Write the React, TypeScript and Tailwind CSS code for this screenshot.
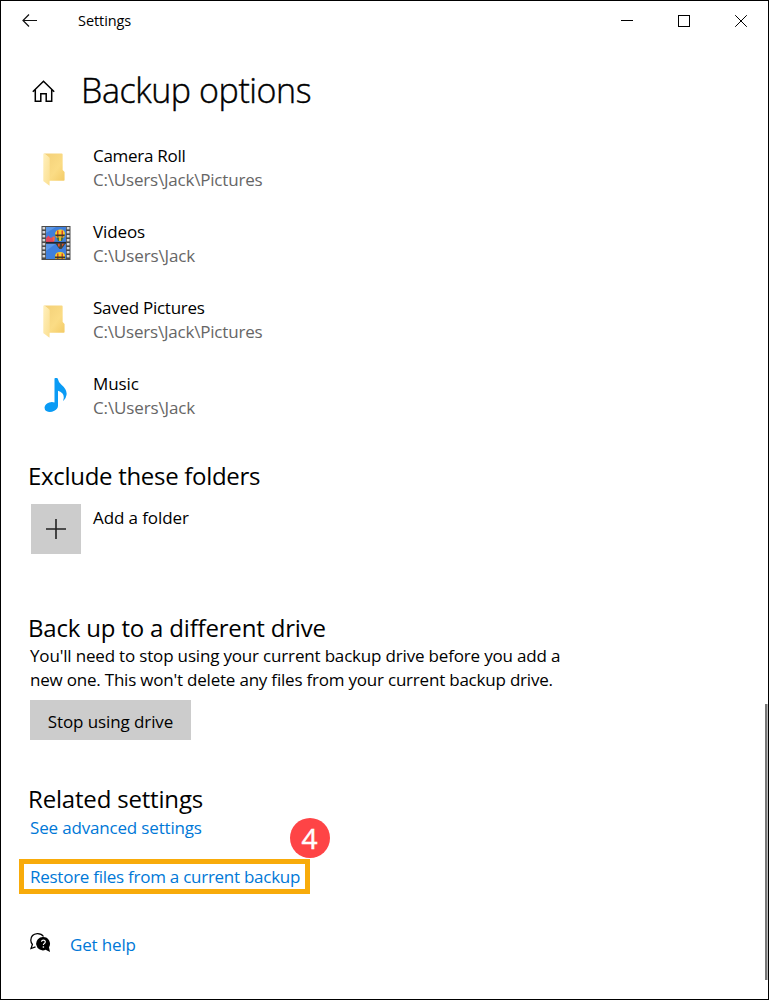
import React from "react";

function FolderIcon() {
  return (
    <svg className="mt-[3px] mr-[3px]" width="23" height="34" viewBox="0 0 24 34" preserveAspectRatio="none" aria-hidden="true">
      <defs>
        <linearGradient id="folderBack" x1="0" y1="0" x2="1" y2="1">
          <stop offset="0" stopColor="#f3d078" />
          <stop offset="0.6" stopColor="#fbdc85" />
          <stop offset="1" stopColor="#f3cb66" />
        </linearGradient>
        <linearGradient id="folderFront" x1="0" y1="0" x2="1" y2="1">
          <stop offset="0" stopColor="#fff0bd" />
          <stop offset="1" stopColor="#fbdf90" />
        </linearGradient>
      </defs>
      <path d="M1 .5h18.500q1 0 1 1V17l2 2v8q0 .8-.8.800H6V4.500z" fill="url(#folderBack)" />
      <path d="M.3 1q0-.8.9-.5l5 3.500q.8.600.8 1.500v20l-.2 7.200-5.900-4.200q-.6-.4-.6-1.100z" fill="url(#folderFront)" />
    </svg>
  );
}

function VideoIcon() {
  const holes = [1, 5, 9, 13, 17, 21, 25, 29];
  return (
    <svg className="-mt-0.5" width="30" height="34" viewBox="0 0 30 34" aria-hidden="true">
      <rect x=".5" width="29" height="34" fill="#4b4b4b" />
      <rect x="5" y="1" width="20" height="15" fill="#3f7fdc" />
      <rect x="5" y="17.500" width="20" height="15.500" fill="#3f80df" />
      <path d="M5 1h10L5 7zM5 17.500h10L5 25z" fill="#5b97e6" />
      <path d="M5 12l2.500-2.500 2 2.500 2-1 1.500 2v3H5z" fill="#e2475d" />
      <path d="M11.500 10.500h2.500l-.5 4.500H12z" fill="#f06a42" />
      <path d="M14 8.500q0-4.700 5-5t5 5q0 2-2.500 4h-5q-2.500-2-2.500-4" fill="#f6cf2c" />
      <path d="M16 4.500h1.500v7H16zM20.500 4.500H22v7h-1.500z" fill="#d8452c" />
      <path d="M14 8.500h10l-.6 1.700h-8.800z" fill="#3d3b2a" />
      <path d="M15.500 11.500h7L21 15h-4z" fill="#3f7042" />
      <path d="M18 11h2v4h-2z" fill="#e3b92c" />
      <rect x="5" y="15.900" width="20" height="1.700" fill="#20262e" />
      <path d="M14.500 17.600h10l-2 2.900-2 2.500h-2l-2-2.500z" fill="#4a4334" />
      <path d="M17 17.800h1.800v2.700H17zM21 17.800h2l-2 2.700z" fill="#e34f29" />
      <path d="M14 31q0-4.800 5-5t5 5v2H14z" fill="#f6cf2c" />
      <path d="M16 27.500h1.500V33H16zM20.500 27.500H22V33h-1.500z" fill="#d8452c" />
      <path d="M14 30.500h10v1.800H14z" fill="#3d3b2a" />
      {holes.map((y) => (
        <g key={y} fill="#d8d8d8">
          <rect x="1.500" y={y} width="2.700" height="2.400" />
          <rect x="25.800" y={y} width="2.700" height="2.400" />
        </g>
      ))}
    </svg>
  );
}

function MusicIcon() {
  return (
    <svg className="-mt-0.5" width="24" height="34" viewBox="0 0 24 34" aria-hidden="true">
      <path
        d="M10.500.8q0-.8.8-.8h1.500q.9 0 1.100 1 .5 3 3.300 5.600Q23.500 12 22.500 17q-.5 3.300-2.800 5.500-.8.500-.4-.5 1.300-4-1-6.700-1.800-2-4.300-2.500v14.700q0 3.500-3.700 5.300-4.300 2.200-8 .3Q.3 32 .6 29q.8-3.300 4.600-4.500 2.800-.9 5.300 0z"
        fill="#0a9bf5"
      />
    </svg>
  );
}

function HomeIcon() {
  return (
    <svg className="mt-0.5" width="24" height="22" viewBox="0 0 24 22" fill="none" stroke="#000" strokeWidth="1.500" aria-hidden="true">
      <path d="M.8 11.800 11.500 1.200l10.700 10.600M3.300 9.800v11.400h5.500v-7.500h5.400v7.500h5.500V9.800" />
    </svg>
  );
}

function HelpIcon() {
  return (
    <svg className="-mt-1" width="21" height="20" viewBox="0 0 21 20" aria-hidden="true">
      <path d="M13.500 3.500Q11.500.6 7.300.7 1 1.300.8 7.200q.1 2.500 1.600 4.300L1 15.500l4.500-1.700" fill="none" stroke="#000" strokeWidth="1.300" />
      <path d="M13.300 4a6.700 6.700 0 0 1 5.700 10.200l1 4.800-4.400-2.200A6.700 6.700 0 1 1 13.300 4" fill="#000" />
      <path d="M11.500 8.800q.2-1.600 1.900-1.600t1.900 1.500q0 1-1 1.700-.9.700-.9 1.700" fill="none" stroke="#fff" strokeWidth="1.200" />
      <rect x="12.700" y="13.300" width="1.400" height="1.400" fill="#fff" />
    </svg>
  );
}

const folders = [
  { name: "Camera Roll", path: "C:\\Users\\Jack\\Pictures", icon: <FolderIcon />, nameTrack: "tracking-[-0.27px]", pathTrack: "tracking-[-0.2px]" },
  { name: "Videos", path: "C:\\Users\\Jack", icon: <VideoIcon />, nameTrack: "tracking-[-0.1px]", pathTrack: "tracking-[-0.13px]" },
  { name: "Saved Pictures", path: "C:\\Users\\Jack\\Pictures", icon: <FolderIcon />, nameTrack: "tracking-[-0.27px]", pathTrack: "tracking-[-0.2px]" },
  { name: "Music", path: "C:\\Users\\Jack", icon: <MusicIcon />, nameTrack: "tracking-[-0.1px]", pathTrack: "tracking-[-0.13px]" },
];

export default function App() {
  return (
    <div className="relative flex h-[1000px] w-[769px] flex-col overflow-hidden border border-black bg-white font-['Open_Sans',sans-serif] text-[17px] leading-6 whitespace-nowrap text-black">
      <header className="flex h-[39px] shrink-0 items-center pl-[21px]">
        <svg width="16" height="14" viewBox="0 0 16 14" fill="none" stroke="#111" strokeWidth="1.200" aria-label="Back">
          <path d="M15 6.500H1M7 .5l-6 6 6 6" />
        </svg>
        <span className="ml-10 text-[14.5px] tracking-[-0.07px]">Settings</span>
        <div className="ml-auto flex items-center gap-[45px] pr-[21px]">
          <svg width="12" height="12" viewBox="0 0 12 12" stroke="#000" aria-label="Minimize"><path d="M0 5.500h12" /></svg>
          <svg width="12" height="12" viewBox="0 0 12 12" fill="none" stroke="#000" aria-label="Maximize"><rect x=".5" y=".5" width="11" height="11" /></svg>
          <svg width="12" height="12" viewBox="0 0 12 12" stroke="#000" aria-label="Close"><path d="m.2.2 11.600 11.600M11.800.2.2 11.800" /></svg>
        </div>
      </header>

      <div className="mt-[26px] flex h-12 shrink-0 items-center pl-[31px]">
        <HomeIcon />
        <h1 className="ml-[25px] text-[34px] leading-[48px] font-light tracking-[-0.43px] [-webkit-text-stroke:0.4px_black]">Backup options</h1>
      </div>

      <ul className="mt-[30px] flex flex-col gap-7">
        {folders.map((f) => (
          <li key={f.name} className="flex h-12">
            <div className="flex w-[92px] items-center justify-center pl-[18px]">{f.icon}</div>
            <div>
              <p className={f.nameTrack}>{f.name}</p>
              <p className={"text-[#666] " + f.pathTrack}>{f.path}</p>
            </div>
          </li>
        ))}
      </ul>

      <section className="mt-10">
        <h2 className="pl-[27px] text-[24px] leading-8 tracking-[-0.3px]">Exclude these folders</h2>
        <div className="mt-3 flex gap-3 pl-[30px]">
          <button className="flex size-[50px] items-center justify-center bg-[#ccc]" aria-label="Add a folder">
            <svg width="20" height="20" viewBox="0 0 20 20" stroke="#222" strokeWidth="1.600"><path d="M0 10h20M10 0v20" /></svg>
          </button>
          <p className="mt-0.5 tracking-[-0.1px]">Add a folder</p>
        </div>
      </section>

      <section className="mt-[58px] pl-[29px]">
        <h2 className="-ml-0.5 text-[24px] leading-8 tracking-[-0.18px]">Back up to a different drive</h2>
        <p className="tracking-[-0.175px]">You'll need to stop using your current backup drive before you add a</p>
        <p className="tracking-[-0.21px]">new one. This won't delete any files from your current backup drive.</p>
        <button className="mt-2 block h-10 w-[161px] bg-[#ccc] pt-[3px] tracking-[-0.1px]">Stop using drive</button>
      </section>

      <section className="mt-[43px] flex flex-col items-start">
        <h2 className="pl-[27px] text-[24px] leading-8 tracking-[-0.18px]">Related settings</h2>
        <a className="mt-px ml-[29px] tracking-[-0.17px] text-[#0078d7]">See advanced settings</a>
        <div className="relative mt-[19px] ml-[18px] flex h-[35px] w-[291px] items-center border-5 border-[#f8ab0a] pl-[6px]">
          <a className="tracking-[-0.26px] text-[#0078d7]">Restore files from a current backup</a>
          <span className="absolute -top-[46px] -right-[25px] flex size-10 items-center justify-center rounded-full bg-[#fe4446] pr-px pb-px text-[28px] text-white [-webkit-text-stroke:0.5px_white]">4</span>
        </div>
      </section>

      <div className="mt-[39px] flex items-center pl-[29px]">
        <HelpIcon />
        <a className="ml-[19px] tracking-[-0.15px] text-[#0078d7]">Get help</a>
      </div>

      <div className="absolute top-[703px] right-0 h-[276px] w-[3px] border-r border-[#bbb] bg-[#777]" />
    </div>
  );
}
